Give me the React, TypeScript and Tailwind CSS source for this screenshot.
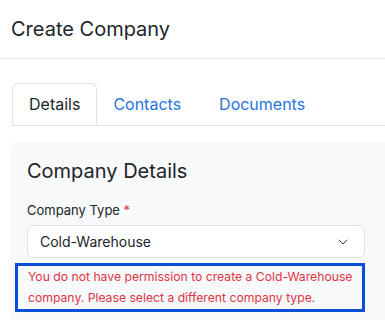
import React from 'react';
import { ChevronDown } from 'lucide-react';

const tabs = ['Details', 'Contacts', 'Documents'];

export default function App() {
  return (
    <div className="w-[385px] h-[320px] overflow-hidden bg-white font-['Inter',sans-serif] text-[#212529]">
      <div className="h-[59px] border-b border-[#e9ecef] px-[11px] flex items-center">
        <h1 className="text-[20px] leading-[28px] font-normal">Create Company</h1>
      </div>

      <div className="mt-[24px] ml-[12px] flex border-b border-[#dee2e6]">
        {tabs.map((t, i) => (
          <div
            key={t}
            className={
              i === 0
                ? 'h-[42px] px-4 flex items-center text-[16px] border border-[#dee2e6] border-b-white rounded-t-md -mb-px bg-white'
                : 'h-[42px] pl-4 pr-[22px] flex items-center text-[16px] text-[#1f74e0]'
            }
          >
            {t}
          </div>
        ))}
      </div>

      <div className="mt-[16px] ml-[11px] bg-[#f8f9fa] rounded-tl-md pl-4 pr-[20px] pt-[15px] pb-6">
        <h2 className="text-[20px] leading-[28px] font-normal">Company Details</h2>
        <div className="mt-[15px] text-[13px] leading-[20px]">
          Company Type <span className="text-[#dc3545]">*</span>
        </div>
        <div className="mt-[5px] h-[33px] bg-white border border-[#dee2e6] rounded-md flex items-center justify-between pl-3 pr-[13px] text-[14px]">
          <span>Cold-Warehouse</span>
          <ChevronDown size={16} strokeWidth={1.5} className="text-[#343a40]" />
        </div>
        <div className="mt-[5px] -ml-3 border-[3px] border-[#0b4fd8] pl-[10px] pr-1 pt-0 pb-[1px] text-[12.2px] leading-[21px] text-[#dc3545]">
          You do not have permission to create a Cold-Warehouse company. Please select a different company type.
        </div>
      </div>
    </div>
  );
}
